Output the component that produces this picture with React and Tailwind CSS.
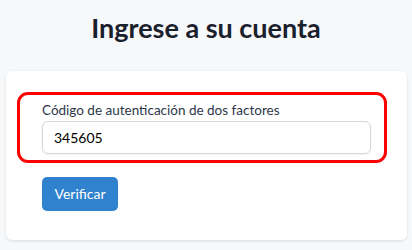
import React, { useState } from 'react';

function App() {
  const [code, setCode] = useState('345605');

  return (
    <div className="min-h-[250px] w-full bg-[#f7f8fa] pt-[10px] font-['Lato',sans-serif]">
      <h1 className="text-center text-[27px] leading-[36px] font-bold text-[#1a202c]">
        Ingrese a su cuenta
      </h1>

      <div className="mt-[25px] ml-[6px] w-[401px] rounded-md bg-white px-9 pt-[29px] pb-[29px] shadow-[0_1px_3px_rgba(0,0,0,0.12)]">
        <div className="relative">
          <div className="pointer-events-none absolute -top-[8px] -bottom-[9px] -left-[25px] -right-[16px] rounded-[11px] border-[3px] border-[#ff0000]"></div>
          <label className="mb-px block text-[13.5px] leading-5 text-[#2d3748]">
            Código de autenticación de dos factores
          </label>
          <input
            type="text"
            value={code}
            onChange={(e) => setCode(e.target.value)}
            className="block h-[33px] w-full rounded-md border border-[#d2d6dc] px-[11px] text-sm text-black shadow-[0_1px_2px_rgba(0,0,0,0.05)] outline-none"
          />
        </div>

        <button
          type="submit"
          className="mt-[23px] h-[34px] w-[76px] rounded-[5px] bg-[#3182ce] text-sm text-white"
        >
          Verificar
        </button>
      </div>
    </div>
  );
}

export default App;
